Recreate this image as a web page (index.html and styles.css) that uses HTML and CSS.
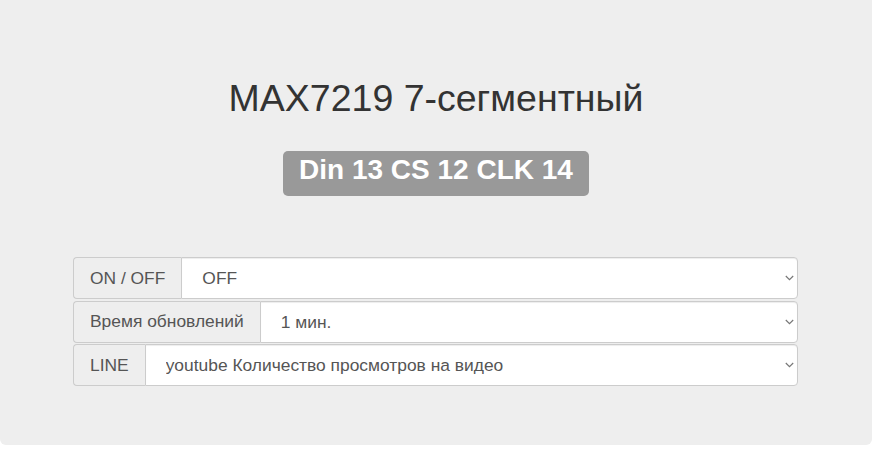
FILE: index.html
```html
<!DOCTYPE html>
<html lang="ru">
<head>
<meta charset="utf-8">
<title>MAX7219</title>
<link rel="stylesheet" href="styles.css">
</head>
<body>
<div class="jumbotron">
  <h1 class="title">MAX7219 7-сегментный</h1>
  <div class="pins"><span class="label">Din 13 CS 12 CLK 14</span></div>
  <div class="form">
    <div class="input-group">
      <span class="addon">ON / OFF</span>
      <select class="control"><option>OFF</option><option>ON</option></select>
      <svg class="chevron" width="9" height="6" viewBox="0 0 9 6"><path d="M0.8 1 L4.5 4.6 L8.2 1" fill="none" stroke="#777" stroke-width="1.2"/></svg>
    </div>
    <div class="input-group">
      <span class="addon">Время обновлений</span>
      <select class="control"><option>1 мин.</option></select>
      <svg class="chevron" width="9" height="6" viewBox="0 0 9 6"><path d="M0.8 1 L4.5 4.6 L8.2 1" fill="none" stroke="#777" stroke-width="1.2"/></svg>
    </div>
    <div class="input-group">
      <span class="addon">LINE</span>
      <select class="control"><option>youtube Количество просмотров на видео</option></select>
      <svg class="chevron" width="9" height="6" viewBox="0 0 9 6"><path d="M0.8 1 L4.5 4.6 L8.2 1" fill="none" stroke="#777" stroke-width="1.2"/></svg>
    </div>
  </div>
</div>
</body>
</html>
```

FILE: styles.css
```css
html, body {
  margin: 0;
  padding: 0;
  background: #fff;
}
body {
  font-family: "Liberation Sans", Arial, sans-serif;
  color: #333;
}
.jumbotron {
  width: 872px;
  height: 445px;
  box-sizing: border-box;
  background: #eee;
  border-radius: 0 0 6px 6px;
  padding-top: 78px;
  display: flex;
  flex-direction: column;
  align-items: center;
}
.title {
  margin: 0;
  font-size: 37.5px;
  font-weight: 500;
  line-height: 1.1;
  color: #333;
}
.pins {
  margin-top: 32px;
}
.label {
  display: inline-block;
  background: #999;
  color: #fff;
  font-weight: bold;
  font-size: 28px;
  line-height: 28px;
  padding: 5px 16px 12px;
  border-radius: 5px;
}
.form {
  margin-top: 61px;
  align-self: flex-start;
  margin-left: 73px;
  width: 725px;
  display: flex;
  flex-direction: column;
  gap: 1.5px;
}
.input-group {
  position: relative;
  display: flex;
  height: 42px;
}
.addon {
  display: flex;
  align-items: center;
  padding: 0 16px;
  background: #eee;
  border: 1px solid #ccc;
  border-right: 0;
  border-radius: 4px 0 0 4px;
  font-size: 17.4px;
  color: #555;
  white-space: nowrap;
}
.control {
  flex: 1;
  height: 42px;
  box-sizing: border-box;
  border: 1px solid #ccc;
  border-radius: 0 4px 4px 0;
  background: #fff;
  font-family: "Liberation Sans", Arial, sans-serif;
  font-size: 17.4px;
  color: #555;
  padding: 0 24px 0 20px;
  -webkit-appearance: none;
  appearance: none;
  box-shadow: inset 0 1px 1px rgba(0,0,0,.075);
}
.chevron {
  position: absolute;
  right: 4px;
  top: 18px;
  pointer-events: none;
}
```
